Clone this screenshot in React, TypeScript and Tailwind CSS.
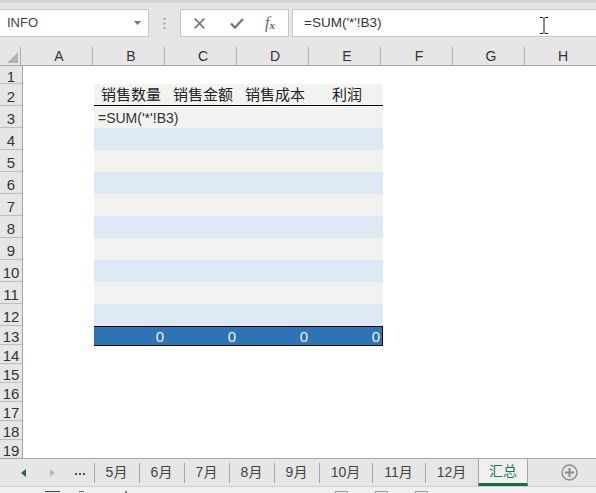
import React from "react";

const font = { fontFamily: '"Liberation Sans", "Noto Sans CJK SC", sans-serif' };
const columns = ["A", "B", "C", "D", "E", "F", "G", "H"];
const rows = Array.from({ length: 19 }, (_, i) => i + 1);
const rowHeight = (r: number) => (r === 1 ? "h-[18px]" : r <= 12 ? "h-[22px]" : "h-[19px]");
const tabs: [string, string][] = [
  ["5月", "w-[45px]"],
  ["6月", "w-[45px]"],
  ["7月", "w-[45px]"],
  ["8月", "w-[45px]"],
  ["9月", "w-[45px]"],
  ["10月", "w-[53px]"],
  ["11月", "w-[53px]"],
  ["12月", "w-[53px]"],
];

function Band({ blue, children }: { blue?: boolean; children?: React.ReactNode }) {
  return (
    <div className={`h-[22px] w-[289px] ${blue ? "bg-[#dde9f4]" : "bg-[#f2f2f0]"}`}>{children}</div>
  );
}

export default function App() {
  return (
    <div style={font} className="w-[596px] h-[493px] overflow-hidden bg-[#e6e6e6] relative flex flex-col text-[#333]">
      <div className="h-[3px] bg-[#d4d4d4]" />
      <div className="h-[6px]" />
      {/* formula bar */}
      <div className="h-[28px] flex items-stretch">
        <div className="w-[149px] bg-white border-y border-r border-[#c6c6c6] flex items-center justify-between pl-[7px] pr-[7px] text-[13px] text-[#444]">
          <span>INFO</span>
          <svg width="7" height="4" viewBox="0 0 7 4"><path d="M0 0h7L3.5 4z" fill="#777" /></svg>
        </div>
        <div className="w-[31px] flex items-center justify-center">
          <svg width="3" height="11" viewBox="0 0 3 11" fill="#b5b5b5">
            <rect y="0" width="3" height="2" />
            <rect y="4.5" width="3" height="2" />
            <rect y="9" width="3" height="2" />
          </svg>
        </div>
        <div className="w-[109px] bg-white border border-[#c6c6c6] flex items-center">
          <div className="w-[37px] flex justify-center">
            <svg width="11" height="11" viewBox="0 0 11 11" stroke="#777" strokeWidth="1.7" fill="none"><path d="M.7.7l9.6 9.6M10.3.7L.7 10.3" /></svg>
          </div>
          <div className="w-[37px] flex justify-center">
            <svg width="14" height="11" viewBox="0 0 14 11" stroke="#777" strokeWidth="2.4" fill="none"><path d="M1 5.5l4 4L13 1" /></svg>
          </div>
          <div className="w-[30px] flex justify-center text-[16px] leading-[20px] text-[#666]" style={{ fontFamily: '"Liberation Serif", serif', fontStyle: "italic" }}>
            f<span className="text-[11px] self-end leading-[16px] font-bold">x</span>
          </div>
        </div>
        <div className="w-[3px]" />
        <div className="flex-1 bg-white border-y border-l border-[#c6c6c6] flex items-center pl-[11px] text-[13.5px] text-[#333]">
          =SUM('*'!B3)
        </div>
      </div>
      <div className="h-[10px]" />
      {/* column headers */}
      <div className="h-[19px] flex border-b border-[#a6a6a6] shrink-0">
        <div className="w-[22px] flex items-end justify-end pr-[2px] pb-[2px]">
          <svg width="11" height="11" viewBox="0 0 11 11"><path d="M11 0v11H0z" fill="#b4b4b4" /></svg>
        </div>
        {columns.map((c) => (
          <div key={c} className="w-[72px] shrink-0 border-l border-[#b0b0b0] flex items-center justify-center pl-[5px] pt-[1px] text-[14px] text-[#333]">
            {c}
          </div>
        ))}
      </div>
      {/* sheet */}
      <div className="h-[393px] flex shrink-0">
        <div className="w-[23px] shrink-0 border-r border-[#a6a6a6]">
          {rows.map((r) => (
            <div key={r} className={`${rowHeight(r)} flex items-center justify-center border-b border-[#bdbdbd] text-[15px] text-[#333] pt-[4px] leading-[16px]`}>
              {r}
            </div>
          ))}
        </div>
        <div className="flex-1 bg-white pt-[18px] pl-[71px]">
          <div className="w-[289px] h-[22px] bg-[#f2f2f0] text-[15px] text-[#222] flex items-center border-b border-black pt-[1px]">
            <span className="w-[72px] text-center pl-[2px]">销售数量</span>
            <span className="w-[72px] text-center pl-[2px]">销售金额</span>
            <span className="w-[72px] text-center pl-[2px]">销售成本</span>
            <span className="w-[72px] text-center pl-[2px]">利润</span>
          </div>
          <Band>
            <div className="pl-[4px] pt-[4px] text-[14px] leading-[16px] text-[#333]">=SUM('*'!B3)</div>
          </Band>
          {[true, false, true, false, true, false, true, false, true].map((b, i) => (
            <Band key={i} blue={b} />
          ))}
          <div className="w-[289px] h-[20px] bg-[#2e74b5] border-y border-r border-black grid grid-cols-4 text-[15px] text-[#e8f0f8] leading-[19px]">
            {[0, 0, 0, 0].map((v, i) => (
              <span key={i} className="text-right pr-[2px]">{v}</span>
            ))}
          </div>
        </div>
      </div>
      {/* tab bar */}
      <div className="h-[28px] flex shrink-0 border-t border-[#a6a6a6] text-[13.5px] text-[#444] -mt-px">
        <div className="w-[94px] flex items-center shrink-0">
          <svg className="ml-[21px]" width="5" height="8" viewBox="0 0 5 8"><path d="M5 0v8L0 4z" fill="#1d6b41" /></svg>
          <svg className="ml-[24px]" width="5" height="8" viewBox="0 0 5 8"><path d="M0 0v8l5-4z" fill="#b9b9b9" /></svg>
          <span className="ml-[20px] mt-[3px] flex gap-[2px]">
            <i className="size-[2px] bg-[#1d6b41]" />
            <i className="size-[2px] bg-[#1d6b41]" />
            <i className="size-[2px] bg-[#1d6b41]" />
          </span>
        </div>
        {tabs.map(([t, w]) => (
          <div key={t} className={`${w} shrink-0 flex items-center`}>
            <div className="w-full h-[20px] border-l border-[#a6a6a6] flex items-center justify-center text-[14px] pr-[1px]">{t}</div>
          </div>
        ))}
        <div className="w-[50px] h-[28px] -mt-px shrink-0 bg-[#f0f0f0] border-x border-t border-[#a6a6a6] border-b-[3px] border-b-[#1d6b41] flex items-center justify-center text-[#1d7a55] text-[14px]">
          汇总
        </div>
        <div className="flex-1 flex items-center justify-center pl-[15px]">
          <svg width="17" height="17" viewBox="0 0 17 17" fill="none" stroke="#8c8c8c">
            <circle cx="8.5" cy="8.5" r="7.5" strokeWidth="1.4" />
            <path d="M8.5 4v9M4 8.5h9" strokeWidth="2" />
          </svg>
        </div>
      </div>
      {/* status strip */}
      <div className="flex-1 bg-[#f0f0f0] border-t border-[#d0d0d0] flex items-end">
        <div className="ml-[45px] w-[15px] h-[2px] border-t border-[#444]" />
        <div className="ml-[19px] w-[5px] h-[2px] border-t border-[#666]" />
        <div className="ml-[41px] w-[2px] h-[2px] bg-[#777]" />
        <div className="ml-[208px] w-[13px] h-[2px] border-t border-x border-[#999]" />
        <div className="ml-[27px] w-[13px] h-[2px] border-t border-x border-[#999]" />
        <div className="ml-[27px] w-[13px] h-[2px] border-t border-x border-[#999]" />
      </div>
      {/* mouse cursor */}
      <svg className="absolute left-[540px] top-[17px]" width="8" height="17" viewBox="0 0 8 17" fill="none" stroke="#111" strokeWidth="1">
        <path d="M0 .5h3l1 1 1-1h3M4 1.5v14M0 16.5h3l1-1 1 1h3" />
      </svg>
    </div>
  );
}
